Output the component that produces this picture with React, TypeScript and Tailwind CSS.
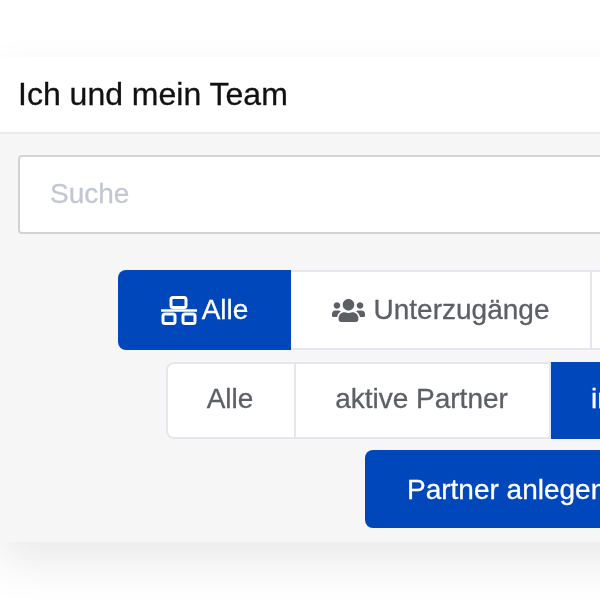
import { FaUsers } from 'react-icons/fa'

function WiredIcon() {
  return (
    <svg width="36" height="29" viewBox="0 0 36 29" fill="none" stroke="currentColor" strokeWidth="3">
      <rect x="10" y="1.5" width="15" height="10" rx="2" />
      <path d="M0 14.5h36" strokeWidth="2.5" />
      <rect x="2" y="18" width="12" height="9.5" rx="2" />
      <rect x="22" y="18" width="12" height="9.5" rx="2" />
    </svg>
  )
}

export default function App() {
  return (
    <div className="h-[600px] w-[600px] overflow-hidden bg-white pt-[57px] font-['Liberation_Sans',Arial,sans-serif] blur-[0.6px] [-webkit-text-stroke:0.3px]">
      <div className="w-[900px] h-[485px] bg-[#f6f6f7] shadow-[0_20px_40px_rgba(60,50,50,0.10)]">
        <div className="h-[77px] bg-white border-b-2 border-[#e9e9f0] pl-[18px] pt-[17px] text-[32px] leading-[40px] text-[#111]">
          Ich und mein Team
        </div>
        <div className="pt-[21px] pl-[18px]">
          <div className="h-[79px] w-[860px] rounded-[4px] border-2 border-[#d2d3d6] bg-white pl-[30px] text-[28px] leading-[73px] text-[#c3c7d3]">
            Suche
          </div>
        </div>
        <div className="ml-[118px] mt-[36px] flex h-[80px] text-[28px] leading-[78px]">
          <div className="flex w-[173px] items-center justify-center gap-[5px] rounded-l-[8px] bg-[#0047bb] text-white">
            <WiredIcon />
            <span>Alle</span>
          </div>
          <div className="flex w-[301px] items-center justify-center gap-[9px] border-y-2 border-r-2 border-[#e6e6ee] bg-white text-[#5c6066]">
            <FaUsers className="h-[27px] w-[33px] text-[#5c6066]" />
            <span>Unterzugänge</span>
          </div>
          <div className="w-[120px] border-y-2 border-r-2 border-[#e6e6ee] bg-white" />
        </div>
        <div className="ml-[166px] mt-[12px] flex h-[77px] text-[28px] leading-[70px] text-[#5c6066]">
          <div className="w-[130px] rounded-l-[8px] border-2 border-[#e6e6ee] bg-white pr-[2px] text-center">Alle</div>
          <div className="w-[255px] border-y-2 border-r-2 border-[#e6e6ee] bg-white pr-[2px] text-center">aktive Partner</div>
          <div className="w-[290px] bg-[#0047bb] pl-[40px] leading-[74px] text-white">inaktive Partner</div>
        </div>
        <div className="ml-[365px] mt-[11px] h-[78px] w-[300px] rounded-[8px] bg-[#0047bb] pl-[42px] text-[28px] leading-[80px] text-white">
          Partner anlegen
        </div>
      </div>
    </div>
  )
}
